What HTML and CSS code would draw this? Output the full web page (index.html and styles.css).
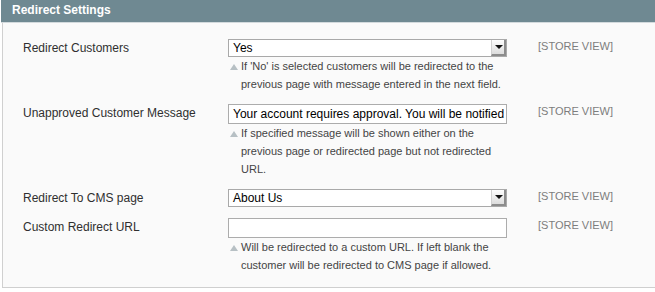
FILE: index.html
```html
<html>

<head>
    <meta charset="utf-8" />
    <link rel="stylesheet" href="styles.css">
</head>

<body>
    <div class="panel">
        <div class="panel-head">Redirect Settings</div>

        <div class="fieldset">
            <!-- Redirect customers -->
            <div class="row">
                <div class="label">Redirect Customers</div>
                <div class="value">
                    <div class="select"><span>Yes</span><span class="arrow"></span></div>
                    <p class="note">If 'No' is selected customers will be redirected to the previous page with message entered in the next field.</p>
                </div>
                <div class="scope">[STORE VIEW]</div>
            </div>

            <!-- Message -->
            <div class="row">
                <div class="label">Unapproved Customer Message</div>
                <div class="value">
                    <div class="input">Your account requires approval. You will be notified</div>
                    <p class="note">If specified message will be shown either on the previous page or redirected page but not redirected URL.</p>
                </div>
                <div class="scope">[STORE VIEW]</div>
            </div>

            <!-- CMS page -->
            <div class="row">
                <div class="label">Redirect To CMS page</div>
                <div class="value">
                    <div class="select"><span>About Us</span><span class="arrow"></span></div>
                </div>
                <div class="scope">[STORE VIEW]</div>
            </div>

            <!-- Custom URL -->
            <div class="row">
                <div class="label">Custom Redirect URL</div>
                <div class="value">
                    <div class="input"></div>
                    <p class="note">Will be redirected to a custom URL. If left blank the customer will be redirected to CMS page if allowed.</p>
                </div>
                <div class="scope">[STORE VIEW]</div>
            </div>
        </div>
    </div>
</body>
</html>
```

FILE: styles.css
```css
body {
    margin: 0;
    background-color: #ffffff;
    font-family: "Liberation Sans", Arial, sans-serif;
    color: #2f2f2f;
}

.panel {
    margin-left: 1px;
}

.panel-head {
    height: 22px;
    line-height: 21px;
    padding-left: 11px;
    background-color: #6f8992;
    border-bottom: 1px solid #d3dadd;
    color: #ffffff;
    font-size: 12px;
    font-weight: bold;
}

.fieldset {
    margin-left: 1px;
    padding: 16px 0 13px 20px;
    background-color: #fafafa;
    border-left: 1px solid #d0d0d0;
    border-bottom: 1px solid #cfcfcf;
}

.row {
    display: grid;
    grid-template-columns: 205px 279px auto;
    align-items: start;
    margin-bottom: 11px;
}

.row:last-child {
    margin-bottom: 0;
}

.label {
    font-size: 12px;
    line-height: 18px;
    color: #2f2f2f;
}

.scope {
    margin-left: 31px;
    font-size: 11px;
    line-height: 14px;
    color: #7d7d7d;
}

.select {
    display: flex;
    justify-content: space-between;
    height: 18px;
    box-sizing: border-box;
    border: 1px solid #a9a9a9;
    background-color: #ffffff;
    font-size: 12px;
    line-height: 16px;
    color: #000000;
}

.select span:first-child {
    padding-left: 4px;
}

.arrow {
    position: relative;
    width: 15px;
    height: 16px;
    box-sizing: border-box;
    background: linear-gradient(#fdfdfd, #dcdcdc);
    border-left: 1px solid #d0d0d0;
    border-right: 2px solid #8c8c8c;
    border-bottom: 2px solid #8c8c8c;
}

.arrow::after {
    content: "";
    position: absolute;
    left: 3px;
    top: 5px;
    border-left: 4px solid transparent;
    border-right: 4px solid transparent;
    border-top: 4px solid #111111;
}

.input {
    height: 20px;
    box-sizing: border-box;
    border: 1px solid #acacac;
    background-color: #ffffff;
    padding-left: 4px;
    font-size: 12px;
    line-height: 18px;
    color: #000000;
    white-space: nowrap;
    overflow: hidden;
}

.note {
    position: relative;
    margin: 0;
    padding-left: 13px;
    font-size: 11px;
    line-height: 18px;
    color: #444444;
}

.note::before {
    content: "";
    position: absolute;
    left: 2px;
    top: 7px;
    border-left: 4px solid transparent;
    border-right: 4px solid transparent;
    border-bottom: 6px solid #b7c0c4;
}
```
